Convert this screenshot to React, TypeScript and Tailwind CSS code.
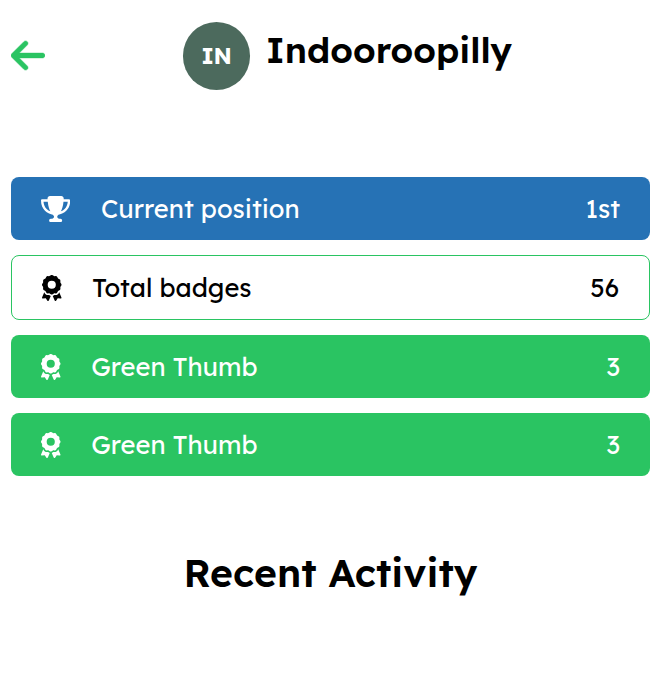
import type { ReactNode } from "react";
import { FaArrowLeft, FaTrophy, FaAward } from "react-icons/fa6";

type RowProps = { icon: ReactNode; label: string; value: string; className: string };

function StatRow({ icon, label, value, className }: RowProps) {
  return (
    <div className={`flex items-center rounded-lg px-[30px] text-[25.5px] ${className}`}>
      {icon}
      <span className="ml-[30.8px] pb-0.5 leading-8">{label}</span>
      <span className="ml-auto pb-0.5 leading-8">{value}</span>
    </div>
  );
}

const award = <FaAward className="h-[26px] w-[19.5px] shrink-0" />;

export default function App() {
  return (
    <main className="h-[682px] w-[652px] overflow-hidden bg-white pr-[2px] pl-[11px] font-['Lexend','Inter',sans-serif] text-black">
      <header className="flex h-[177px] items-start pt-[22px]">
        <button aria-label="Back" className="mt-[14px] text-[#2ac462]">
          <FaArrowLeft className="h-[39px] w-[34px] stroke-[6]" />
        </button>
        <div className="ml-[138px] flex h-[68px] w-[67px] items-center justify-center rounded-full bg-[#4c6a5d] text-[22.8px] leading-[28px] font-bold tracking-[-0.3px] text-white">
          IN
        </div>
        <h1 className="ml-[15.8px] pt-[5px] text-[35.84px] leading-[45px] font-semibold">Indooroopilly</h1>
      </header>
      <section className="flex flex-col gap-[15px]">
        <StatRow
          icon={<FaTrophy className="h-[26px] w-[29.25px] shrink-0" />}
          label="Current position"
          value="1st"
          className="h-[63px] bg-[#2672b5] text-white"
        />
        <StatRow icon={award} label="Total badges" value="56" className="h-[65px] border border-[#2ac462]" />
        <StatRow icon={award} label="Green Thumb" value="3" className="h-[63px] bg-[#2ac462] text-white" />
        <StatRow icon={award} label="Green Thumb" value="3" className="h-[63px] bg-[#2ac462] text-white" />
      </section>
      <h2 className="mt-[72px] text-center text-[39px] leading-[50px] font-semibold">Recent Activity</h2>
    </main>
  );
}
